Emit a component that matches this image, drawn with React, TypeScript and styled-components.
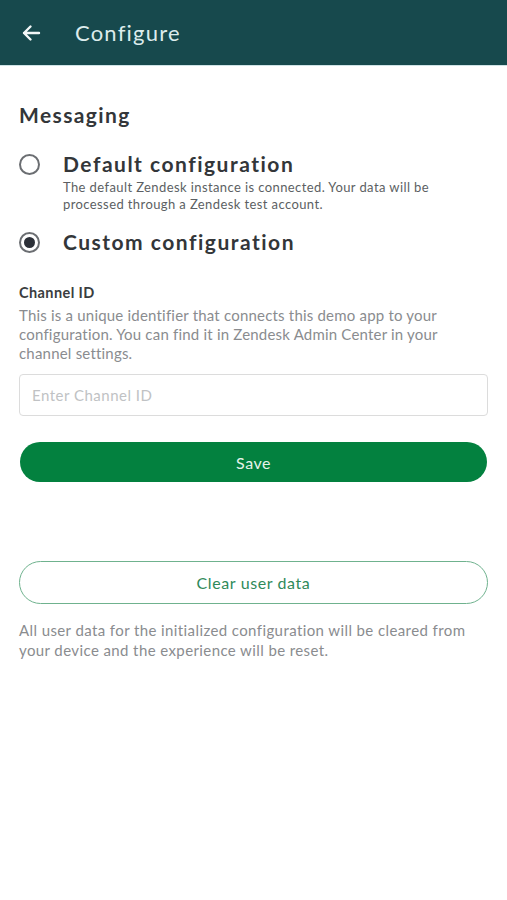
import React from "react";
import styled, { createGlobalStyle } from "styled-components";

const Global = createGlobalStyle`
  html, body { margin: 0; padding: 0; background: #ffffff; }
  body { font-family: "Lato", "Noto Sans", sans-serif; -webkit-font-smoothing: antialiased; }
  * { box-sizing: border-box; }
`;

const Page = styled.div`
  width: 507px;
  min-height: 900px;
  background: #ffffff;
  display: flex;
  flex-direction: column;
`;

const Header = styled.header`
  height: 66px;
  background: #17494d;
  border-bottom: 1px solid #cfe3e6;
  display: flex;
  align-items: center;
  padding-left: 21px;
  gap: 34px;
`;

const BackButton = styled.button`
  width: 20px;
  height: 20px;
  padding: 0;
  border: none;
  background: none;
  display: flex;
  align-items: center;
  justify-content: center;
`;

const Title = styled.h1`
  margin: 0;
  font-size: 22px;
  font-weight: 400;
  color: #dcecec;
  letter-spacing: 1.2px;
`;

const Content = styled.main`
  padding: 37px 19px 0 19px;
  display: flex;
  flex-direction: column;
`;

const SectionTitle = styled.h2`
  margin: 0 0 24px 0;
  font-size: 21px;
  font-weight: 700;
  color: #333639;
  letter-spacing: 1.4px;
  line-height: 24px;
`;

const OptionRow = styled.label<{ $mb: number }>`
  display: grid;
  grid-template-columns: 20px 1fr;
  column-gap: 24px;
  align-items: center;
  margin-bottom: ${(p) => p.$mb}px;
`;

const Radio = styled.span<{ $checked?: boolean }>`
  width: 21px;
  height: 21px;
  border-radius: 50%;
  border: 2px solid #6b6e72;
  display: flex;
  align-items: center;
  justify-content: center;
  &::after {
    content: "";
    width: 11px;
    height: 11px;
    border-radius: 50%;
    background: ${(p) => (p.$checked ? "#2c3038" : "transparent")};
  }
`;

const OptionLabel = styled.span`
  font-size: 21px;
  font-weight: 700;
  color: #333639;
  letter-spacing: 1.5px;
  line-height: 26px;
`;

const OptionDesc = styled.p`
  grid-column: 2;
  margin: 2px 0 0 0;
  font-size: 13px;
  line-height: 17px;
  color: #5c5f63;
  letter-spacing: 0.4px;
  white-space: nowrap;
`;

const FieldLabel = styled.div`
  font-size: 14.5px;
  font-weight: 700;
  color: #3a3d40;
  line-height: 18px;
  margin-top: 29px;
  letter-spacing: 0.4px;
`;

const FieldHelp = styled.p`
  margin: 4px 0 0 0;
  font-size: 15px;
  line-height: 19px;
  color: #8a8c8f;
  letter-spacing: 0.2px;
`;

const Input = styled.input`
  margin-top: 11px;
  width: 100%;
  height: 42px;
  border: 1px solid #dcdcdc;
  border-radius: 4px;
  padding: 0 12px;
  font-family: inherit;
  font-size: 15px;
  letter-spacing: 0.5px;
  color: #333;
  outline: none;
  &::placeholder { color: #c0c2c4; }
`;

const PrimaryButton = styled.button`
  margin: 26px 1px 0 1px;
  height: 40px;
  border: none;
  border-radius: 20px;
  background: #03813f;
  color: #e6f3ea;
  font-family: inherit;
  font-size: 16px;
  letter-spacing: 0.5px;
`;

const OutlineButton = styled.button`
  margin-top: 79px;
  height: 43px;
  border: 1.5px solid #6fb28e;
  border-radius: 22px;
  background: #ffffff;
  color: #2f8a5a;
  font-family: inherit;
  font-size: 16px;
  letter-spacing: 0.6px;
`;

const Note = styled.p`
  margin: 16px 0 0 0;
  font-size: 15px;
  line-height: 20px;
  color: #8a8c8f;
  letter-spacing: 0.4px;
`;

export default function App() {
  return (
    <Page>
      <Global />
      <Header>
        <BackButton aria-label="Back">
          <svg width="20" height="20" viewBox="0 0 20 20" fill="none">
            <path d="M18 10H3M9.5 3.5L3 10l6.5 6.5" stroke="#f2f7f7" strokeWidth="2.4" strokeLinecap="round" strokeLinejoin="round" />
          </svg>
        </BackButton>
        <Title>Configure</Title>
      </Header>
      <Content>
        <SectionTitle>Messaging</SectionTitle>
        <OptionRow $mb={16}>
          <Radio />
          <OptionLabel>Default configuration</OptionLabel>
          <OptionDesc>
            The default Zendesk instance is connected. Your data will be
            <br />
            processed through a Zendesk test account.
          </OptionDesc>
        </OptionRow>
        <OptionRow $mb={0}>
          <Radio $checked />
          <OptionLabel>Custom configuration</OptionLabel>
        </OptionRow>
        <FieldLabel>Channel ID</FieldLabel>
        <FieldHelp>
          This is a unique identifier that connects this demo app to your configuration. You can find it in Zendesk Admin Center in your channel settings.
        </FieldHelp>
        <Input placeholder="Enter Channel ID" />
        <PrimaryButton>Save</PrimaryButton>
        <OutlineButton>Clear user data</OutlineButton>
        <Note>
          All user data for the initialized configuration will be cleared from your device and the experience will be reset.
        </Note>
      </Content>
    </Page>
  );
}
